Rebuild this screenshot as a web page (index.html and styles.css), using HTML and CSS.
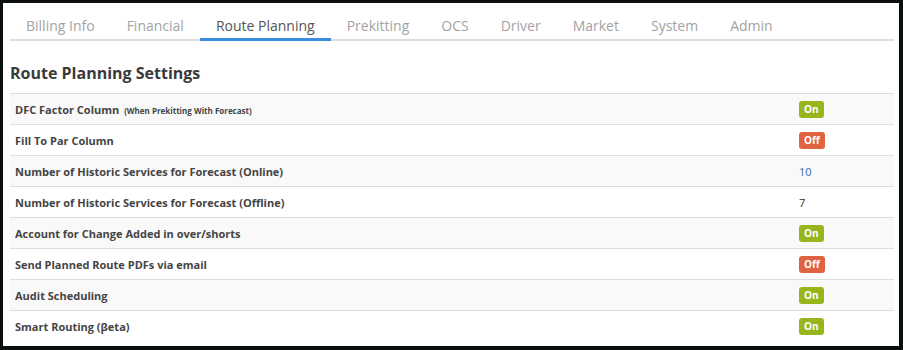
FILE: index.html
```html
<!DOCTYPE html>
<html lang="en">
<head>
    <meta charset="UTF-8">
    <meta name="viewport" content="width=device-width, initial-scale=1.0">
    <title>Settings - Route Planning</title>
    <link rel="stylesheet" href="styles.css">
</head>
<body>
    <div class="frame">
        <nav class="tabs">
            <ul>
                <li><a href="#">Billing Info</a></li>
                <li><a href="#">Financial</a></li>
                <li class="active"><a href="#">Route Planning</a></li>
                <li><a href="#">Prekitting</a></li>
                <li><a href="#">OCS</a></li>
                <li><a href="#">Driver</a></li>
                <li><a href="#">Market</a></li>
                <li><a href="#">System</a></li>
                <li><a href="#">Admin</a></li>
            </ul>
        </nav>

        <h2>Route Planning Settings</h2>

        <table class="settings">
            <tr>
                <td class="name">DFC Factor Column <small>(When Prekitting With Forecast)</small></td>
                <td class="value"><span class="toggle on">On</span></td>
            </tr>
            <tr>
                <td class="name">Fill To Par Column</td>
                <td class="value"><span class="toggle off">Off</span></td>
            </tr>
            <tr>
                <td class="name">Number of Historic Services for Forecast (Online)</td>
                <td class="value"><a href="#">10</a></td>
            </tr>
            <tr>
                <td class="name">Number of Historic Services for Forecast (Offline)</td>
                <td class="value">7</td>
            </tr>
            <tr>
                <td class="name">Account for Change Added in over/shorts</td>
                <td class="value"><span class="toggle on">On</span></td>
            </tr>
            <tr>
                <td class="name">Send Planned Route PDFs via email</td>
                <td class="value"><span class="toggle off">Off</span></td>
            </tr>
            <tr>
                <td class="name">Audit Scheduling</td>
                <td class="value"><span class="toggle on">On</span></td>
            </tr>
            <tr>
                <td class="name">Smart Routing (βeta)</td>
                <td class="value"><span class="toggle on">On</span></td>
            </tr>
        </table>
    </div>
</body>
</html>
```

FILE: styles.css
```css
html, body {
    height: 100%;
}
body {
    font-family: 'Open Sans', 'DejaVu Sans', sans-serif;
    margin: 0;
    padding: 3px 4px 4px 3px;
    box-sizing: border-box;
    background-color: #0b100c;
    color: #333;
}
.frame {
    background-color: #fff;
    height: 100%;
    padding: 0 5px 0 7px;
    box-sizing: border-box;
    overflow: hidden;
}
.tabs ul {
    list-style-type: none;
    margin: 0;
    padding: 0;
    display: flex;
    border-bottom: 2px solid #ddd;
}
.tabs a {
    display: block;
    padding: 12px 16px 1px;
    font-size: 14px;
    line-height: 22px;
    color: #a3a3a3;
    text-decoration: none;
    border-bottom: 3px solid transparent;
    margin-bottom: -2px;
}
.tabs li.active a {
    color: #555;
    border-bottom-color: #3a8ee0;
}
h2 {
    font-size: 16px;
    line-height: 24px;
    font-weight: 700;
    color: #3a3a3a;
    margin: 20px 0 8px;
}
.settings {
    width: 884px;
    border-collapse: collapse;
    font-size: 11px;
}
.settings td {
    border-top: 1px solid #ddd;
    height: 30px;
    padding: 0 5px;
    vertical-align: middle;
}
.settings tr:nth-child(odd) td {
    background-color: #f9f9f9;
}
.settings .name {
    width: 774px;
    font-weight: 700;
    color: #444;
}
.settings small {
    font-size: 8px;
    margin-left: 2px;
}
.settings .value {
    color: #333;
}
.settings .value a {
    color: #2f6cad;
    text-decoration: none;
}
.toggle {
    display: inline-block;
    padding: 0 5px;
    height: 17px;
    line-height: 17px;
    border-radius: 3px;
    color: #fff;
    font-size: 10px;
    font-weight: 700;
    vertical-align: middle;
}
.toggle.on {
    background-color: #98b51c;
}
.toggle.off {
    background-color: #df6341;
}
```
